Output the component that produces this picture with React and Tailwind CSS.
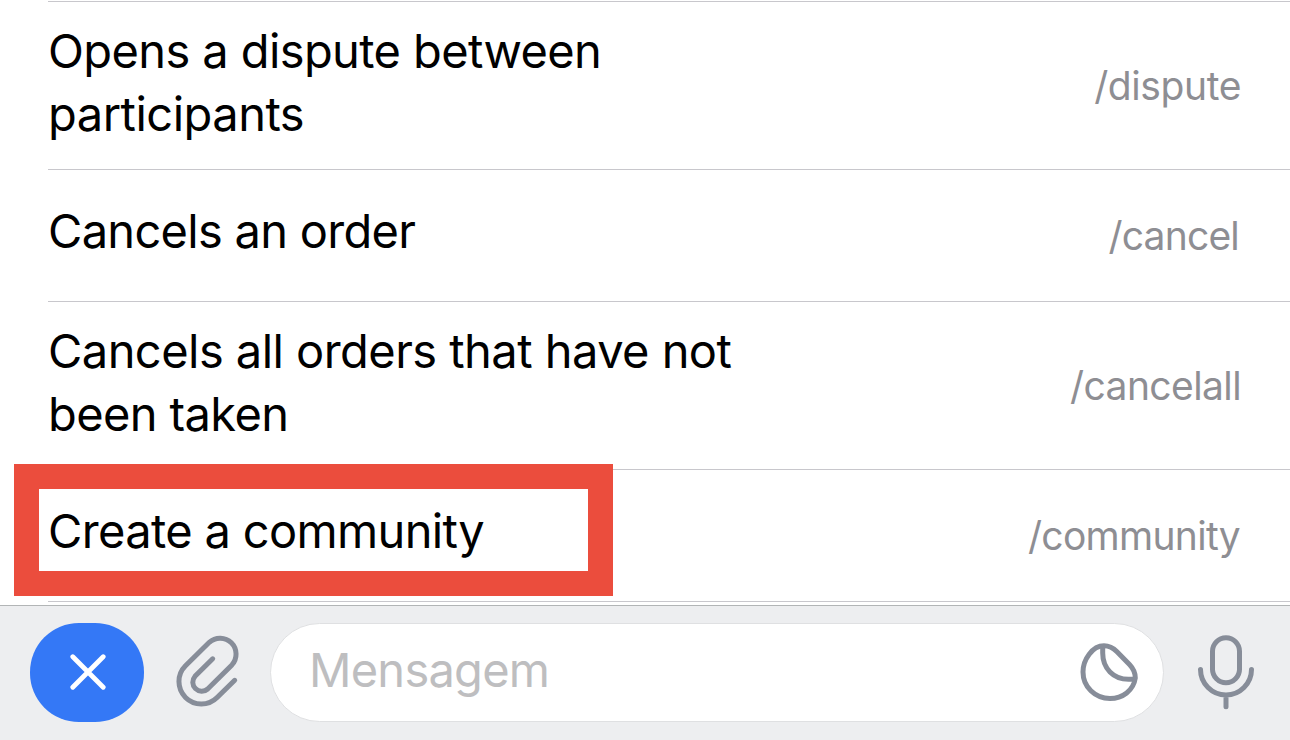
const commands = [
  { lines: [{ text: "Opens a dispute between", style: "tracking-[-0.6px]" }, { text: "participants", style: "tracking-[-0.5px]" }], command: "/dispute", commandStyle: "tracking-[-0.4px]", height: "h-[168px]", offset: "pb-2" },
  { lines: [{ text: "Cancels an order", style: "tracking-[-0.7px]" }], command: "/cancel", commandStyle: "tracking-[-0.8px] pr-0.5", height: "h-[132px]", offset: "pb-2.5" },
  { lines: [{ text: "Cancels all orders that have not", style: "tracking-[-0.54px]" }, { text: "been taken", style: "tracking-[-0.6px]" }], command: "/cancelall", commandStyle: "tracking-[-0.6px]", height: "h-[168px]", offset: "pb-2" },
  { lines: [{ text: "Create a community", style: "tracking-[-0.65px]" }], command: "/community", commandStyle: "tracking-[-0.7px] pr-px", height: "h-[132px]", offset: "pb-2.5", highlighted: true },
];

function CommandRow({ item }) {
  return (
    <li className={`relative flex shrink-0 items-center justify-between border-b border-[#c8c7cc] pr-[49px] ${item.height}`}>
      <div className={`text-[47px] leading-[63px] text-black ${item.offset}`}>
        {item.lines.map((line) => (
          <div key={line.text} className="whitespace-nowrap">
            <span className={line.style}>{line.text}</span>
          </div>
        ))}
      </div>
      <span className={`text-[39px] leading-[48px] text-[#8e8e93] ${item.commandStyle}`}>{item.command}</span>
      {item.highlighted && (
        <div className="absolute -left-[34px] -top-[6px] h-[132px] w-[599px] border-[25px] border-[#eb4d3d]" />
      )}
    </li>
  );
}

function CloseIcon() {
  return (
    <svg className="mb-px ml-0.5 size-9" viewBox="0 0 36 36" fill="none" stroke="white" strokeWidth="4.8" strokeLinecap="round">
      <path d="M2.800 2.800 33.200 33.200M33.200 2.800 2.800 33.200" />
    </svg>
  );
}

function PaperclipIcon() {
  return (
    <svg className="h-[76px] w-[66px]" viewBox="0 0 66 76" fill="none" stroke="#878d99" strokeWidth="5" strokeLinecap="round">
      <path d="M38.700 26.800 21 44.300A9 9 0 0 0 33.700 57L57.900 32.900A16 16 0 0 0 35.300 10.300L11.500 33.800A22.300 22.300 0 0 0 43.100 65.400L60.700 48.300" />
    </svg>
  );
}

function StickerIcon() {
  return (
    <svg className="mb-0.5 size-[60px]" viewBox="0 0 60 60" fill="none" stroke="#878d99" strokeWidth="5">
      <path d="M25 3.800C30 3.800 34.500 6.200 38 9.700L50.500 22.500C54 26.200 56.300 30.500 56.300 36C54.500 48.500 43.500 56.500 31 56.500C16 56.500 4 44.800 4 30C4 17.500 13.500 3.800 25 3.800Z" />
      <path d="M23.700 4.500V11C23.700 26.500 34.500 37.300 49.500 37.300H56" />
    </svg>
  );
}

function MicIcon() {
  return (
    <svg className="h-[76px] w-[58px]" viewBox="0 0 58 76" fill="none" stroke="#878d99" strokeWidth="5" strokeLinecap="round">
      <rect x="15.500" y="3.800" width="27" height="45" rx="13.500" />
      <path d="M3.500 35.500C3.500 49.500 15 61 29 61S54.500 49.500 54.500 35.500M29 61V72.800" />
    </svg>
  );
}

export default function App() {
  return (
    <main className="flex h-[740px] w-[1290px] flex-col overflow-hidden bg-white font-['Inter',sans-serif]">
      <ul className="ml-12 mt-px flex h-[604px] shrink-0 flex-col border-t border-[#c8c7cc]">
        {commands.map((item) => (
          <CommandRow key={item.command} item={item} />
        ))}
      </ul>
      <footer className="flex h-[135px] shrink-0 items-start border-t border-[#b2b5b6] bg-[#edeef0] pl-[30px] pt-[17px]">
        <button aria-label="Close" className="flex h-[99px] w-[114px] items-center justify-center rounded-[49px] bg-[#3478f6]">
          <CloseIcon />
        </button>
        <button aria-label="Attach" className="ml-[30px] mt-[9px]">
          <PaperclipIcon />
        </button>
        <div className="ml-[30px] flex h-[99px] w-[894px] items-center justify-between rounded-full border border-[#dfe0e2] bg-white pl-[38px] pr-6">
          <span className="pb-[5px] text-[47px] leading-[60px] tracking-[-0.75px] text-[#bebec0]">Mensagem</span>
          <StickerIcon />
        </div>
        <button aria-label="Record" className="ml-[33px] mt-[11px]">
          <MicIcon />
        </button>
      </footer>
    </main>
  );
}
